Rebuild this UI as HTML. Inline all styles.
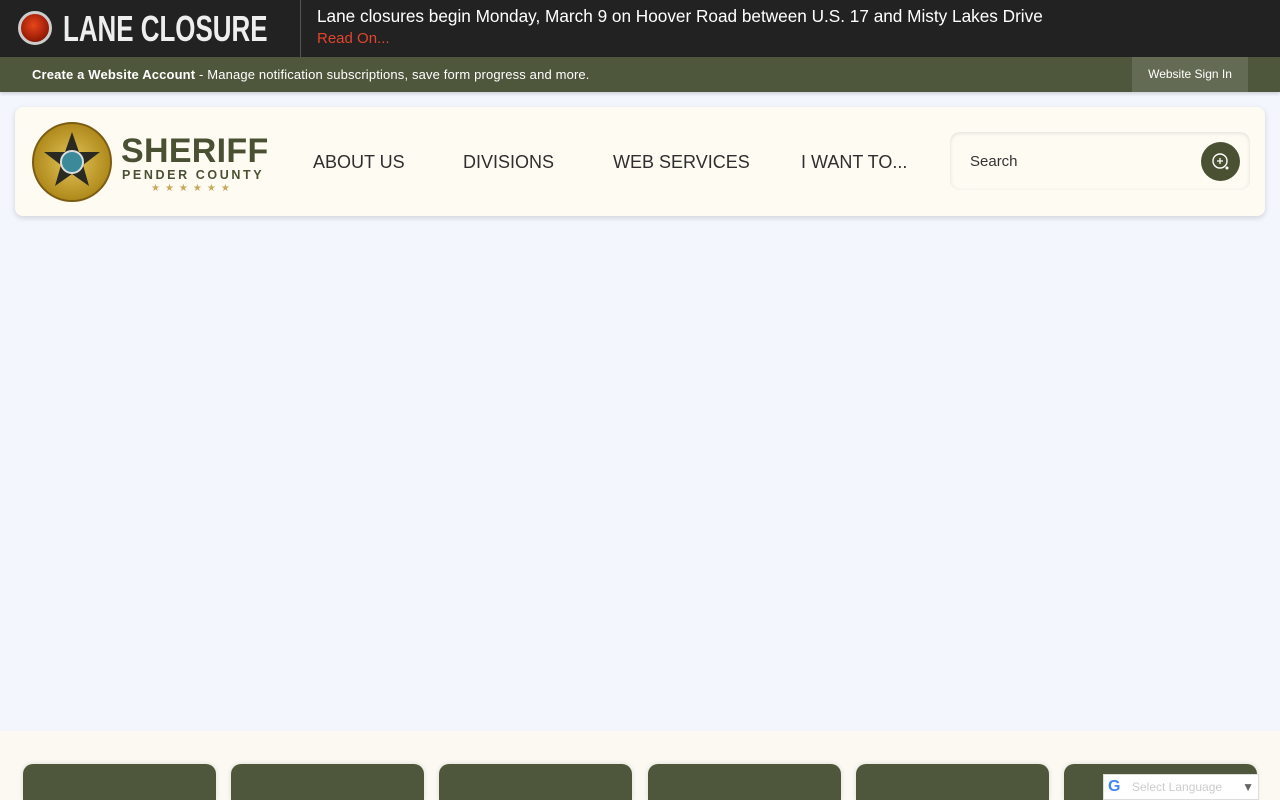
<!DOCTYPE html>
<html><head><style>
*{margin:0;padding:0;box-sizing:border-box}
html{overflow:hidden;height:800px}
body{width:1280px;height:800px;overflow:hidden;background:#f3f7fd;font-family:"Liberation Sans",sans-serif;position:relative}
.top{position:absolute;left:0;top:0;width:1280px;height:57px;background:#222}
.dot{position:absolute;left:18px;top:11px;width:34px;height:34px;border-radius:50%;background:radial-gradient(circle at 45% 40%,#e8461a,#a11e08 60%,#5a0c02);border:3px solid #ccc}
.lc{position:absolute;left:63px;top:8px;color:#eee;font-weight:bold;font-size:36px;transform:scaleX(.72);transform-origin:left}
.sep{position:absolute;left:300px;top:0;width:1px;height:57px;background:#555}
.msg{position:absolute;left:317px;top:6px;color:#fff;font-size:17.2px}
.ro{position:absolute;left:317px;top:30px;color:#e2452d;font-size:15px}
.bar{position:absolute;left:0;top:57px;width:1280px;height:35px;background:#4e573b;box-shadow:0 2px 3px rgba(0,0,0,.15)}
.bar .t{position:absolute;left:32px;top:10px;color:#fff;font-size:13px;letter-spacing:.15px}
.sign{position:absolute;left:1132px;top:0;width:116px;height:35px;background:#646b54;color:#fff;font-size:12px;text-align:center;line-height:35px}
.hdr{position:absolute;left:15px;top:107px;width:1250px;height:109px;background:#fefbf3;border-radius:8px;box-shadow:0 2px 6px rgba(0,0,0,.15)}
.badge{position:absolute;left:17px;top:15px;width:80px;height:80px;border-radius:50%;background:radial-gradient(circle,#e4c55a,#b08a1c 70%,#6b5210);border:2px solid #7a5d12}
.sh{position:absolute;left:106px;top:25px;color:#4a5133;font-weight:bold;font-size:34px;letter-spacing:.3px}
.pc{position:absolute;left:107px;top:61px;color:#4a5133;font-weight:bold;font-size:12.5px;letter-spacing:2.6px}
.st{position:absolute;left:136px;top:76px;color:#c9a85e;font-size:10px;letter-spacing:5px}
.nav{position:absolute;top:45px;color:#2f2f2f;font-size:18px}
.srch{position:absolute;left:935px;top:25px;width:300px;height:58px;border-radius:10px;background:#fefbf3;box-shadow:inset 0 1px 4px rgba(0,0,0,.12)}
.srch span{position:absolute;left:20px;top:21px;font-size:15px;color:#333}
.sb{position:absolute;left:251px;top:10px;width:39px;height:39px;border-radius:50%;background:#4a5133}
.foot{position:absolute;left:0;top:731px;width:1280px;height:69px;background:#fcf9f2}
.card{position:absolute;top:764px;width:193px;height:36px;background:#4e573b;border-radius:10px 10px 0 0;box-shadow:0 0 6px rgba(0,0,0,.12)}
.gt{position:absolute;left:1103px;top:774px;width:156px;height:26px;background:#fff;border:1px solid #ddd;font-size:12px;color:#ccc;line-height:24px;padding-left:28px}
</style></head><body>
<div class="top"><div class="dot"></div><div class="lc">LANE CLOSURE</div><div class="sep"></div>
<div class="msg">Lane closures begin Monday, March 9 on Hoover Road between U.S. 17 and Misty Lakes Drive</div>
<div class="ro">Read On...</div></div>
<div class="bar"><div class="t"><b>Create a Website Account</b> - Manage notification subscriptions, save form progress and more.</div><div class="sign">Website Sign In</div></div>
<div class="hdr">
<div class="badge"><svg width="76" height="76" viewBox="0 0 76 76"><polygon points="38,8 45,28 66,28 49,41 55,62 38,50 21,62 27,41 10,28 31,28" fill="#2a2a22"/><circle cx="38" cy="38" r="11" fill="#3a8a9a" stroke="#ddd" stroke-width="2"/></svg></div>
<div class="sh">SHERIFF</div><div class="pc">PENDER COUNTY</div><div class="st">★★★★★★</div>
<div class="nav" style="left:298px">ABOUT US</div>
<div class="nav" style="left:448px">DIVISIONS</div>
<div class="nav" style="left:598px">WEB SERVICES</div>
<div class="nav" style="left:786px">I WANT TO...</div>
<div class="srch"><span>Search</span><div class="sb"><svg width="39" height="39" viewBox="0 0 39 39"><circle cx="19" cy="19" r="7" fill="none" stroke="#fff" stroke-width="1.4"/><path d="M19 16v6M16 19h6" stroke="#fff" stroke-width="1.3"/><circle cx="26" cy="26" r="1.5" fill="#fff"/></svg></div></div>
</div>
<div class="foot"></div>
<div class="card" style="left:23px"></div><div class="card" style="left:231px"></div><div class="card" style="left:439px"></div><div class="card" style="left:648px"></div><div class="card" style="left:856px"></div><div class="card" style="left:1064px"></div>
<div class="gt"><span style="position:absolute;left:4px;top:0;color:#4285f4;font-weight:bold;font-size:16px">G</span>Select Language <span style="position:absolute;right:4px;color:#666">▼</span></div>
</body></html>
